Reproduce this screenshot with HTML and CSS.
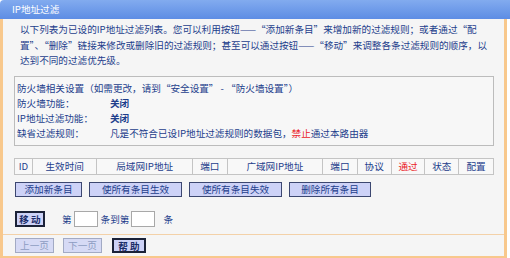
FILE: index.html
```html
<html>

<head>
  <title>IP地址过滤</title>
  <link rel="stylesheet" href="styles.css">
</head>

<body>
  <div class="title">IP地址过滤</div>
  <div class="panel">
    <div class="content">
      <p class="intro">以下列表为已设的IP地址过滤列表。您可以利用按钮——“添加新条目”来增加新的过滤规则；或者通过“配置”、“删除”链接来修改或删除旧的过滤规则；甚至可以通过按钮——“移动”来调整各条过滤规则的顺序，以达到不同的过滤优先级。</p>

      <div class="fw-box">
        <div class="fw-head">防火墙相关设置（如需更改，请到“安全设置” - “防火墙设置”）</div>
        <div class="fw-label">防火墙功能：</div>
        <div class="fw-value strong">关闭</div>
        <div class="fw-label">IP地址过滤功能：</div>
        <div class="fw-value strong">关闭</div>
        <div class="fw-label">缺省过滤规则：</div>
        <div class="fw-value">凡是不符合已设IP地址过滤规则的数据包，<span class="red">禁止</span>通过本路由器</div>
      </div>

      <table class="rules">
        <tr>
          <td class="c-id">ID</td>
          <td class="c-time">生效时间</td>
          <td class="c-ip">局域网IP地址</td>
          <td class="c-port">端口</td>
          <td class="c-ip">广域网IP地址</td>
          <td class="c-port">端口</td>
          <td class="c-small">协议</td>
          <td class="c-small red">通过</td>
          <td class="c-small">状态</td>
          <td class="c-cfg">配置</td>
        </tr>
      </table>

      <div class="actions">
        <button class="btn b-add">添加新条目</button>
        <button class="btn b-on">使所有条目生效</button>
        <button class="btn b-off">使所有条目失效</button>
        <button class="btn b-del">删除所有条目</button>
      </div>

      <div class="move-row">
        <button class="btn btn-strong b-move">移 动</button>
        <span class="lbl-first">第</span>
        <input class="num" type="text">
        <span>条到第</span>
        <input class="num" type="text">
        <span class="lbl-last">条</span>
      </div>
    </div>

    <div class="footer-bar">
      <button class="btn btn-off b-page" disabled>上一页</button>
      <button class="btn btn-off b-page" disabled>下一页</button>
      <button class="btn btn-strong b-help">帮 助</button>
    </div>
  </div>
</body>

</html>
```

FILE: styles.css
```css
body {
  margin: 0;
  padding: 0;
  font-family: "Noto Sans CJK SC", "DejaVu Sans", sans-serif;
  font-size: 9.6px;
  color: #1d3e8c;
  background: #ffffff;
}
.title {
  height: 19px;
  line-height: 19px;
  padding-left: 12px;
  color: #ffffff;
  font-size: 9.6px;
  background: linear-gradient(#82abef, #5d8de4);
  border-radius: 4px 0 0 0;
}
.panel {
  width: 501px;
  background: #f5f5f5;
  border-left: 3px solid #f8c88c;
  border-right: 3px solid #f8c88c;
  border-bottom: 2px solid #f8c88c;
}
.content {
  padding: 3px 10px 0 11px;
}
.intro {
  margin: 0;
  padding-left: 6px;
  line-height: 15.5px;
  width: 470px;
}
.fw-box {
  margin-top: 7px;
  box-sizing: border-box;
  height: 70px;
  padding: 4px 2px;
  border: 1px solid #bcbcbc;
  background: #f7f7f7;
  display: grid;
  grid-template-columns: 93px 1fr;
  line-height: 15px;
  width: 480px;
}
.fw-head {
  grid-column: 1 / 3;
}
.strong {
  font-weight: bold;
}
.red {
  color: #ea2127;
}
table.rules {
  margin-top: 12px;
  width: 480px;
  border-collapse: collapse;
  border: 1px solid #b0b0b0;
  font-family: "Noto Sans CJK SC", "DejaVu Sans", sans-serif;
  font-size: 9.6px;
  color: #1d3e8c;
}
table.rules td {
  border: 1px solid #c4c4c4;
  background: #f8f8f8;
  text-align: center;
  height: 15px;
  line-height: 15px;
  padding: 0;
  white-space: nowrap;
}
table.rules td.red {
  color: #ea2127;
}
td.c-id { width: 17px; }
td.c-time { width: 64px; }
td.c-ip { width: 95px; }
td.c-port { width: 34px; }
td.c-small { width: 33px; }
td.c-cfg { width: 34px; }
.btn {
  font-family: "Noto Sans CJK SC", "DejaVu Sans", sans-serif;
  font-size: 9.6px;
  height: 15px;
  line-height: 13px;
  padding: 0;
  color: #1d3e8c;
  background: #cdd2f7;
  border: 1px solid #3c4770;
  border-radius: 0;
}
.actions {
  margin-top: 7px;
  padding-left: 1px;
  display: flex;
  gap: 7px;
}
.b-add { width: 67px; }
.b-on { width: 93px; }
.b-off { width: 93px; }
.b-del { width: 82px; }
.move-row {
  margin-top: 14px;
  padding-left: 1px;
  height: 16px;
  display: flex;
  align-items: center;
}
.btn-strong {
  font-weight: bold;
  border: 2px solid #1b2238;
  color: #1b2d6a;
}
.b-move {
  width: 30px;
  height: 16px;
}
.lbl-first {
  margin-left: 17px;
}
.lbl-last {
  margin-left: 5px;
}
input.num {
  width: 24px;
  height: 16px;
  box-sizing: border-box;
  border: 1px solid #a8a8a8;
  background: #ffffff;
  margin: 0 3px 0 2px;
  padding: 0;
}
.footer-bar {
  margin-top: 7px;
  border-top: 1px solid #f3d1a8;
  padding: 3px 0 3px 12px;
  display: flex;
  gap: 9px;
}
.btn-off {
  color: #8d9cc2;
  border-color: #a2aac4;
  background: #d6daf5;
}
.b-page { width: 39px; }
.b-help {
  width: 34px;
  margin-left: 1px;
}
```
